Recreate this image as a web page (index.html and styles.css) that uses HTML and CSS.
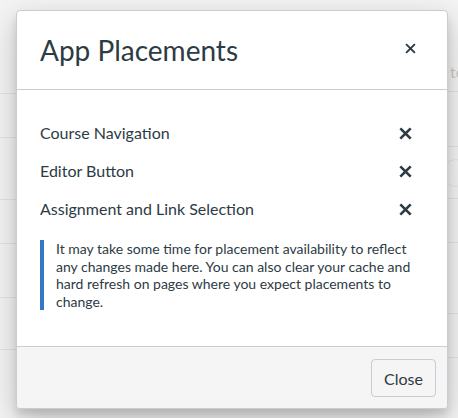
FILE: index.html
```html
<!DOCTYPE html>
<html lang="en">
<head>
<meta charset="utf-8">
<title>App Placements</title>
<link rel="stylesheet" href="styles.css">
</head>
<body>
<div class="page">
  <div class="bg-col bg-left">
    <div class="bg-row" style="height:93px"></div>
    <div class="bg-row" style="height:43px"></div>
    <div class="bg-row" style="height:61px"></div>
    <div class="bg-row" style="height:43px"></div>
    <div class="bg-row" style="height:53px"></div>
    <div class="bg-row" style="height:51px"></div>
  </div>
  <div class="bg-mid"></div>
  <div class="bg-col bg-right">
    <div class="bg-row bg-head" style="height:92px"><span class="bg-text">te</span></div>
    <div class="bg-row" style="height:54px"></div>
    <div class="bg-row" style="height:51px"><span class="bg-circle"></span></div>
    <div class="bg-row" style="height:43px"></div>
    <div class="bg-row" style="height:70px"></div>
    <div class="bg-row" style="height:43px"></div>
  </div>
</div>

<div class="modal" role="dialog" aria-label="App Placements">
  <header class="modal-header">
    <h2 class="modal-title">App Placements</h2>
    <button class="close-btn" aria-label="Close">
      <svg viewBox="0 0 12 12" width="11" height="11"><path d="M1.2 1.2 L10.8 10.8 M10.8 1.2 L1.2 10.8" stroke="#2d3b45" stroke-width="2.1" stroke-linecap="butt" fill="none"/></svg>
    </button>
  </header>
  <div class="modal-body">
    <ul class="placements">
      <li class="placement">
        <span class="placement-name">Course Navigation</span>
        <button class="remove-btn" aria-label="Remove Course Navigation">
          <svg viewBox="0 0 14 14" width="13" height="13"><path d="M1.4 1.4 L12.6 12.6 M12.6 1.4 L1.4 12.6" stroke="#2d3b45" stroke-width="2.8" fill="none"/></svg>
        </button>
      </li>
      <li class="placement">
        <span class="placement-name">Editor Button</span>
        <button class="remove-btn" aria-label="Remove Editor Button">
          <svg viewBox="0 0 14 14" width="13" height="13"><path d="M1.4 1.4 L12.6 12.6 M12.6 1.4 L1.4 12.6" stroke="#2d3b45" stroke-width="2.8" fill="none"/></svg>
        </button>
      </li>
      <li class="placement">
        <span class="placement-name">Assignment and Link Selection</span>
        <button class="remove-btn" aria-label="Remove Assignment and Link Selection">
          <svg viewBox="0 0 14 14" width="13" height="13"><path d="M1.4 1.4 L12.6 12.6 M12.6 1.4 L1.4 12.6" stroke="#2d3b45" stroke-width="2.8" fill="none"/></svg>
        </button>
      </li>
    </ul>
    <p class="note">It may take some time for placement availability to reflect any changes made here. You can also clear your cache and hard refresh on pages where you expect placements to change.</p>
  </div>
  <footer class="modal-footer">
    <button class="btn">Close</button>
  </footer>
</div>
</body>
</html>
```

FILE: styles.css
```css
html, body {
  margin: 0;
  padding: 0;
}

body {
  width: 458px;
  height: 418px;
  overflow: hidden;
  background: #f3f3f3;
  font-family: Lato, "Noto Sans", "Liberation Sans", sans-serif;
  color: #2d3b45;
  position: relative;
}

.page {
  display: flex;
  height: 418px;
}

.bg-col {
  display: flex;
  flex-direction: column;
}

.bg-left {
  width: 16px;
}

.bg-mid {
  flex: 1;
}

.bg-right {
  width: 10px;
}

.bg-row {
  box-sizing: content-box;
  border-bottom: 1px solid #e3e3e3;
  position: relative;
  overflow: hidden;
}

.bg-head {
  display: flex;
  align-items: flex-end;
  padding-bottom: 10px;
  box-sizing: border-box;
}

.bg-text {
  font-size: 16px;
  line-height: 19px;
  color: #c9c9c9;
  margin-left: 2px;
  white-space: nowrap;
}

.bg-circle {
  position: absolute;
  left: -6px;
  top: 12px;
  width: 26px;
  height: 26px;
  border: 1px solid #e6e6e6;
  border-radius: 50%;
}

.modal {
  position: absolute;
  left: 16px;
  top: 10px;
  width: 432px;
  box-sizing: border-box;
  background: #fff;
  border: 1px solid #c7cdd1;
  border-radius: 4px;
  box-shadow: 0 6px 7px rgba(0, 0, 0, 0.1), 0 10px 28px rgba(0, 0, 0, 0.22);
  overflow: hidden;
}

.modal-header {
  display: flex;
  align-items: flex-start;
  justify-content: space-between;
  padding: 24px 19px 24px 23px;
  border-bottom: 1px solid #c7cdd1;
}

.modal-title {
  margin: 0;
  font-size: 28px;
  line-height: 30px;
  font-weight: 400;
  color: #2d3b45;
}

.close-btn,
.remove-btn {
  background: none;
  border: 0;
  padding: 0;
  width: 36px;
  height: 36px;
  display: flex;
  align-items: center;
  justify-content: center;
  cursor: pointer;
}

.close-btn {
  height: 26px;
}

.close-btn svg,
.remove-btn svg {
  display: block;
}

.modal-body {
  padding: 24px 24px 24px 23px;
}

.placements {
  list-style: none;
  margin: 0;
  padding: 0;
}

.placement {
  height: 38px;
  display: flex;
  align-items: center;
  justify-content: space-between;
}

.placement-name {
  font-size: 16px;
  line-height: 24px;
}

.note {
  margin: 12px 0 12px 0;
  padding-left: 12px;
  border-left: 4px solid #3477c2;
  font-size: 14px;
  line-height: 17.5px;
  color: #2d3b45;
}

.modal-footer {
  display: flex;
  justify-content: flex-end;
  padding: 12px 11px 11px 12px;
  background: #f5f5f5;
  border-top: 1px solid #c7cdd1;
}

.btn {
  height: 38px;
  padding: 0 12px;
  font-family: Lato, "Noto Sans", "Liberation Sans", sans-serif;
  font-size: 16px;
  color: #2d3b45;
  background: #f5f5f5;
  border: 1px solid #c7cdd1;
  border-radius: 4px;
  cursor: pointer;
}
```
